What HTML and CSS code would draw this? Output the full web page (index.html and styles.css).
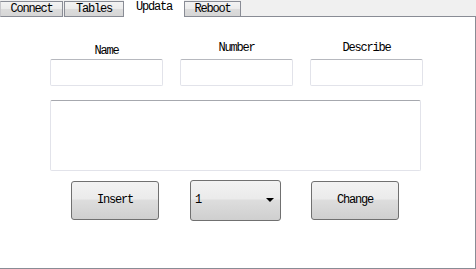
FILE: index.html
```html
<!DOCTYPE html>
<html lang="en">
<head>
  <meta charset="UTF-8">
  <title>Updata</title>
  <link rel="stylesheet" href="styles.css">
</head>
<body>

  <div class="tabs">
    <div class="tab tab-connect">Connect</div>
    <div class="tab tab-tables">Tables</div>
    <div class="tab tab-updata active">Updata</div>
    <div class="tab tab-reboot">Reboot</div>
    <div class="tab-rest"></div>
  </div>

  <div class="panel">
    <div class="fields">
      <label class="field">
        <span class="label label-name">Name</span>
        <input type="text" class="box">
      </label>
      <label class="field">
        <span class="label">Number</span>
        <input type="text" class="box">
      </label>
      <label class="field">
        <span class="label">Describe</span>
        <input type="text" class="box">
      </label>
    </div>

    <textarea class="memo"></textarea>

    <div class="actions">
      <button class="btn btn-insert">Insert</button>
      <div class="combo">
        <span>1</span>
        <span class="arrow"></span>
      </div>
      <button class="btn btn-change">Change</button>
    </div>
  </div>

</body>
</html>
```

FILE: styles.css
```css
* {
  margin: 0;
  padding: 0;
  box-sizing: border-box;
  font-family: 'Liberation Mono', 'DejaVu Sans Mono', monospace;
}

body {
  width: 476px;
  height: 269px;
  background: #fff;
  color: #000;
  font-size: 12px;
  letter-spacing: -1.2px;
  overflow: hidden;
}

/* tab strip */
.tabs {
  display: flex;
  align-items: flex-end;
  height: 17px;
  background: #f0f0f0;
}

.tab {
  height: 16px;
  border: 1px solid #898c95;
  background: linear-gradient(#f3f3f3, #ebebeb 50%, #dcdcdc 51%, #d6d6d6);
  text-align: center;
  line-height: 14px;
}

.tab-connect { width: 63px; margin-right: 1px; border-left-color: #c8c8cc; }
.tab-tables { width: 60px; }
.tab-reboot { width: 57px; }

.tab.active {
  width: 60px;
  height: 17px;
  border: none;
  background: #fff;
  line-height: 15px;
}

.tab-rest {
  flex: 1;
  border-bottom: 1px solid #898c95;
}

/* content panel */
.panel {
  height: 252px;
  background: #fff;
  border-right: 1px solid #898c95;
  border-bottom: 1px solid #898c95;
  padding: 24px 0 0 50px;
}

.fields {
  display: grid;
  grid-template-columns: repeat(3, 113px);
  column-gap: 17px;
}

.field {
  display: flex;
  flex-direction: column;
  align-items: center;
}

.label {
  height: 18px;
  line-height: 14px;
}

.label-name {
  padding-top: 3px;
}

.box,
.memo {
  border: 1px solid #e2e3ea;
  border-top-color: #b6b8be;
  border-radius: 2px;
  background: #fff;
  outline: none;
}

.box {
  width: 113px;
  height: 27px;
}

.memo {
  display: block;
  width: 371px;
  height: 71px;
  margin-top: 14px;
  resize: none;
  border-top-color: #a6a8ae;
}

/* buttons row */
.actions {
  display: flex;
  align-items: center;
  margin: 9px 0 0 21px;
}

.btn,
.combo {
  border: 1px solid #707070;
  border-radius: 3px;
  background: linear-gradient(#f2f2f2, #ebebeb 45%, #dddddd 50%, #cfcfcf);
  font-size: 12px;
  color: #000;
}

.btn {
  width: 88px;
  height: 39px;
  letter-spacing: -1.2px;
  padding-bottom: 2px;
}

.combo {
  width: 91px;
  height: 41px;
  margin: 0 30px 0 31px;
  display: flex;
  align-items: center;
  justify-content: space-between;
  padding: 0 4px 2px 4px;
}

.arrow {
  width: 0;
  height: 0;
  border-left: 4px solid transparent;
  border-right: 4px solid transparent;
  border-top: 4px solid #000;
  margin-right: 2px;
}
```
